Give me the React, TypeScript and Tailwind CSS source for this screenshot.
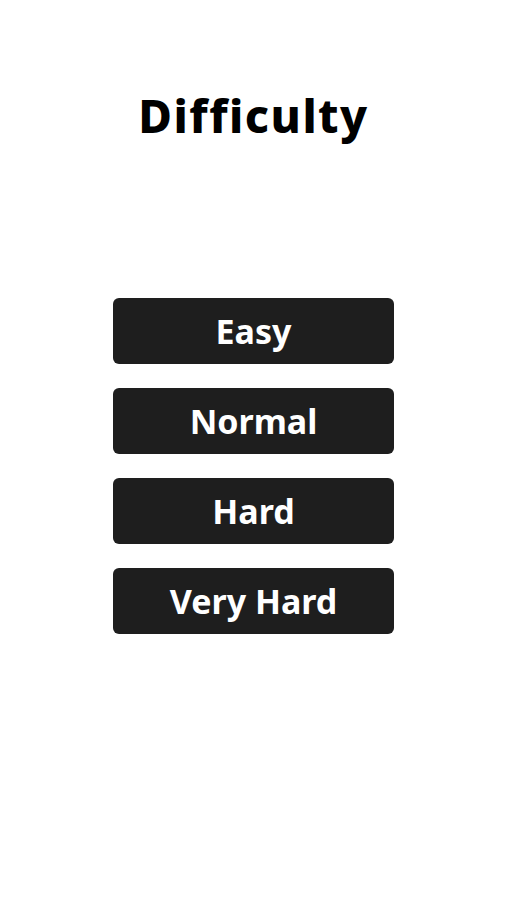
export default function App() {
  const items = ["Easy", "Normal", "Hard", "Very Hard"];
  return (
    <div className="w-[507px] h-[900px] bg-white flex flex-col items-center" style={{ fontFamily: '"Noto Sans", "Open Sans", sans-serif' }}>
      <h1 className="mt-[83px] text-[46px] leading-[64px] font-extrabold text-black tracking-[1.5px]">Difficulty</h1>
      <div className="mt-[151px] flex flex-col gap-[24px]">
        {items.map((t) => (
          <button key={t} className="w-[281px] h-[66px] rounded-[6px] bg-[#1e1e1e] text-white text-[34px] font-bold flex items-center justify-center">
            {t}
          </button>
        ))}
      </div>
    </div>
  );
}
